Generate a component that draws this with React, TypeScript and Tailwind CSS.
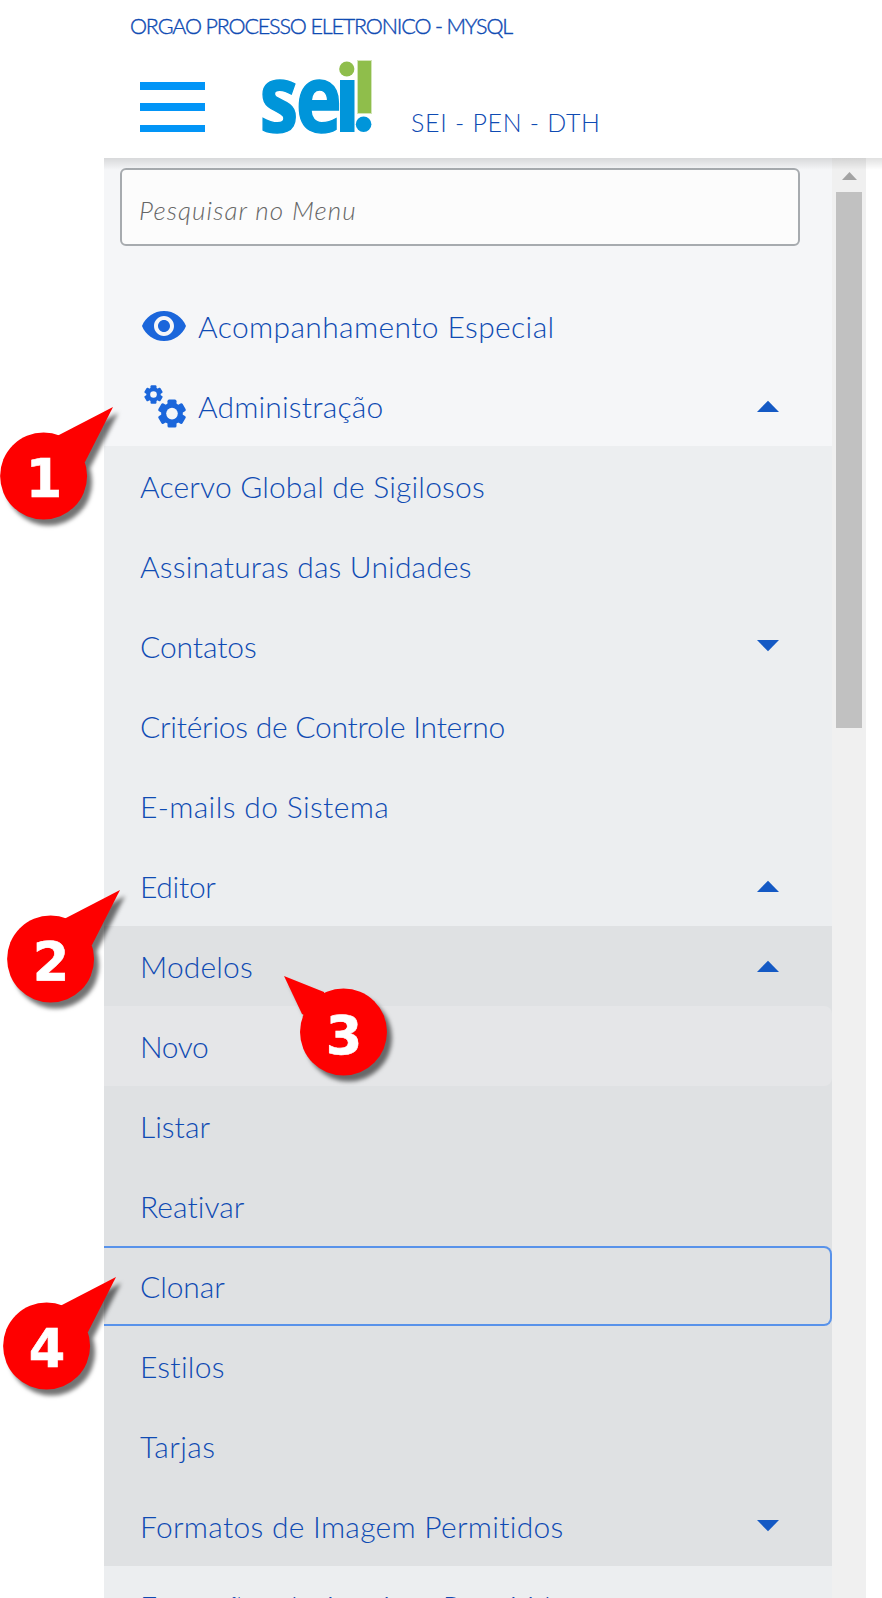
import React from "react";
import { MdVisibility } from "react-icons/md";

type Caret = "up" | "down";

function CaretIcon({ dir }: { dir: Caret }) {
  return (
    <svg width="22" height="12" viewBox="0 0 22 12" className="shrink-0 fill-[#1459c4]">
      {dir === "up" ? <path d="M11 0.7 L22 12 H0 Z" /> : <path d="M0 0 H22 L11 11.3 Z" />}
    </svg>
  );
}

function Gear({ cx, cy, s, hole }: { cx: number; cy: number; s: number; hole: number }) {
  return (
    <g transform={`translate(${cx} ${cy}) scale(${s})`}>
      <circle r="10.8" />
      {[0, 60, 120].map((a) => (
        <rect key={a} x="-4.5" y="-14" width="9" height="28" rx="1.6" transform={`rotate(${a})`} />
      ))}
      <circle r={hole} fill="#f5f6f8" />
    </g>
  );
}

function GearsIcon() {
  return (
    <svg width="44" height="44" viewBox="0 0 44 44" className="shrink-0 fill-[#1b66db]">
      <Gear cx={9.5} cy={10.5} s={0.66} hole={5} />
      <Gear cx={28} cy={29.6} s={1} hole={5.8} />
    </svg>
  );
}

function Item({
  label,
  tracking,
  caret,
  icon,
  className = "",
}: {
  label: string;
  tracking: string;
  caret?: Caret;
  icon?: React.ReactNode;
  className?: string;
}) {
  return (
    <li className={`flex h-20 items-center pr-[53px] pl-9 ${className}`}>
      {icon}
      <span className={`flex-1 whitespace-nowrap leading-[80px] ${tracking}`}>{label}</span>
      {caret && <CaretIcon dir={caret} />}
    </li>
  );
}

function Logo() {
  return (
    <svg width="114" height="78" viewBox="260 58 114 78" className="shrink-0">
      <g transform="translate(259.5 132) scale(0.83 1)">
        <text x="0" y="0" fontSize="94" fontWeight="700" fill="#0095da" stroke="#0095da" strokeWidth="1.5" fontFamily="'Open Sans', sans-serif" letterSpacing="-3">
          se
        </text>
      </g>
      <rect x="340" y="80" width="14.5" height="52" fill="#0095da" />
      <circle cx="346.8" cy="69" r="7.6" fill="#8fbe4b" />
      <rect x="357.5" y="60.5" width="14" height="53" fill="#8fbe4b" stroke="#d3e5b8" />
      <circle cx="363.6" cy="124.3" r="7.8" fill="#0095da" />
    </svg>
  );
}

function Callout({ n, className, flip }: { n: string; className: string; flip?: boolean }) {
  return (
    <svg width="130" height="136" viewBox="0 0 130 136" className={`absolute ${className}`}>
      <g className="drop-shadow-[5px_6px_2px_rgba(0,0,0,0.55)]">
        {flip ? (
          <path fill="#fe0000" d="M2 1 L42 17 L42 50 L20 39 Z" />
        ) : (
          <path fill="#fe0000" d="M113 3 L58 31.5 L50 60 L85 58 Z" />
        )}
        <circle cx={flip ? 61.5 : 43.6} cy={flip ? 57 : 72} r="43.5" fill="#fe0000" />
      </g>
      <text
        x={flip ? 62 : 44}
        y={flip ? 78.5 : 93}
        textAnchor="middle"
        fill="#fff"
        stroke="#fff"
        strokeWidth="0.6"
        fontSize="52.5"
        fontWeight="700"
        fontFamily="'DejaVu Sans', sans-serif"
      >
        {n}
      </text>
    </svg>
  );
}

export default function App() {
  return (
    <div className="relative flex h-[1598px] w-[882px] flex-col overflow-hidden bg-white font-['Lato',sans-serif] font-light text-[#0f4bb3]">
      <header className="h-[158px] shrink-0 pl-[130px]">
        <div className="pt-[14px] text-[21.5px] leading-[25px] tracking-[-1.15px] whitespace-nowrap [-webkit-text-stroke:0.4px]">ORGAO PROCESSO ELETRONICO - MYSQL</div>
        <div className="flex pt-[19px]">
          <div className="mt-[24px] ml-[10px] flex h-[50px] w-[65px] flex-col justify-between">
            <span className="h-[7.5px] bg-[#0295f7]" />
            <span className="h-[7.5px] bg-[#0295f7]" />
            <span className="h-[7.5px] bg-[#0295f7]" />
          </div>
          <div className="ml-[55px]">
            <Logo />
          </div>
          <div className="mt-[49px] ml-[37px] text-[25px] leading-[30px] tracking-[0.7px] whitespace-nowrap">SEI - PEN - DTH</div>
        </div>
      </header>

      <div className="ml-[104px] flex h-[1440px] shrink-0">
        <nav className="h-[1440px] w-[728px] overflow-hidden bg-[#f5f6f8] text-[30px]">
          <div className="h-[128px] pt-[10px] pl-4">
            <div className="h-[78px] w-[680px] rounded-md border-2 border-[#a7abaf] bg-[#fcfcfc] pl-[17px] text-[26px] leading-[80px] tracking-[1.1px] text-[#666] italic">
              Pesquisar no Menu
            </div>
          </div>
          <ul>
            <Item label="Acompanhamento Especial" tracking="tracking-[0.38px]" icon={<MdVisibility size={48} className="mr-[10px] shrink-0 fill-[#1b66db]" />} />
            <Item label="Administração" tracking="tracking-[0.17px]" caret="up" icon={<div className="mr-[10px] ml-[4px]"><GearsIcon /></div>} />
          </ul>
          <ul className="bg-[#eceef0]">
            <Item label="Acervo Global de Sigilosos" tracking="tracking-[0.17px]" />
            <Item label="Assinaturas das Unidades" tracking="tracking-[0.17px]" />
            <Item label="Contatos" tracking="tracking-[-0.1px]" caret="down" />
            <Item label="Critérios de Controle Interno" tracking="tracking-[-0.25px]" />
            <Item label="E-mails do Sistema" tracking="tracking-[0.36px]" />
            <Item label="Editor" tracking="tracking-[-0.3px]" caret="up" />
          </ul>
          <ul className="bg-[#dfe1e3]">
            <Item label="Modelos" tracking="tracking-[0.15px]" caret="up" />
            <Item label="Novo" tracking="tracking-[-0.4px]" className="rounded-r-lg bg-[#e5e6e8]" />
            <Item label="Listar" tracking="tracking-[0px]" />
            <Item label="Reativar" tracking="tracking-[0.05px]" />
            <Item label="Clonar" tracking="tracking-[-0.1px]" className="rounded-r-lg border-y-2 border-r-2 border-[#5892ea]" />
            <Item label="Estilos" tracking="tracking-[0.25px]" />
            <Item label="Tarjas" tracking="tracking-[0.4px]" />
            <Item label="Formatos de Imagem Permitidos" tracking="tracking-[0.28px]" caret="down" />
          </ul>
          <ul className="bg-[#eceef0]">
            <Item label="Extensões de Arquivos Permitidas" tracking="tracking-[0.1px]" />
          </ul>
        </nav>
        <div className="flex h-[1440px] w-[34px] flex-col items-center bg-[#f0f0f0] pt-[14px]">
          <svg width="15" height="8" viewBox="0 0 15 8" className="mb-[12px] fill-[#a3a3a3]">
            <path d="M7.5 0 L15 8 H0 Z" />
          </svg>
          <div className="h-[536px] w-[26px] bg-[#c1c1c1]" />
        </div>
      </div>

      <div className="absolute top-[158px] left-[104px] h-[12px] w-[778px] bg-linear-to-b from-black/12 to-transparent" />

      <Callout n="1" className="top-[403.5px] left-0" />
      <Callout n="2" className="top-[887px] left-[7px]" />
      <Callout n="3" className="top-[975px] left-[282px]" flip />
      <Callout n="4" className="top-[1274px] left-[3px]" />
    </div>
  );
}
